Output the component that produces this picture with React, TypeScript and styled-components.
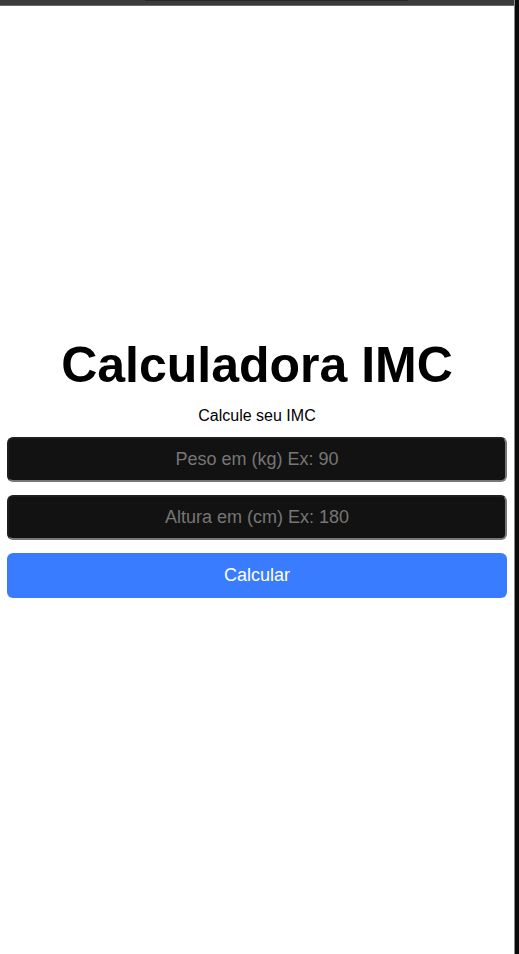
import React from "react";
import styled, { createGlobalStyle } from "styled-components";

const GlobalStyle = createGlobalStyle`
  body {
    margin: 0;
    background: #ffffff;
    font-family: "Liberation Sans", Arial, sans-serif;
  }
`;

const App = () => {
  return (
    <>
      <GlobalStyle />
      <Shell>
        <Column>
          <TopBar>
            <TopBarShade />
          </TopBar>
          <Page>
            <Title>Calculadora IMC</Title>
            <Subtitle>Calcule seu IMC</Subtitle>
            <Form onSubmit={(e) => e.preventDefault()}>
              <Field type="number" placeholder="Peso em (kg) Ex: 90" />
              <Field type="number" placeholder="Altura em (cm) Ex: 180" />
              <SubmitBtn type="submit">Calcular</SubmitBtn>
            </Form>
          </Page>
        </Column>
        <EdgeBar />
      </Shell>
    </>
  );
};

export default App;

const Shell = styled.div`
  display: flex;
  width: 100%;
  height: 100vh;
`;

const Column = styled.div`
  flex: 1;
  display: flex;
  flex-direction: column;
`;

const TopBar = styled.div`
  height: 5px;
  background-color: #3b3b3b;
  border-bottom: 1px solid #6a6a6a;
  position: relative;
`;

const TopBarShade = styled.div`
  position: absolute;
  top: 0;
  left: 145px;
  width: 263px;
  height: 1px;
  background-color: #262626;
`;

const Page = styled.div`
  flex: 1;
  display: flex;
  flex-direction: column;
  align-items: center;
  padding-top: 332px;
`;

const Title = styled.h1`
  margin: 0;
  font-size: 50px;
  line-height: 1.1;
  font-weight: 700;
  color: #000;
`;

const Subtitle = styled.p`
  margin: 14px 0 12px;
  font-size: 16px;
  color: #000;
`;

const Form = styled.form`
  width: calc(100% - 14px);
  display: flex;
  flex-direction: column;
  gap: 13px;
`;

const Field = styled.input`
  box-sizing: border-box;
  width: 100%;
  height: 45px;
  background-color: #121212;
  border: 2px solid;
  border-color: #1e1e1e #777777 #777777 #1e1e1e;
  border-radius: 6px;
  color: #fff;
  font-family: "Liberation Sans", Arial, sans-serif;
  font-size: 18px;
  text-align: center;
  outline: none;
  appearance: textfield;

  &::placeholder {
    color: #767676;
  }
  &::-webkit-inner-spin-button,
  &::-webkit-outer-spin-button {
    -webkit-appearance: none;
    margin: 0;
  }
`;

const SubmitBtn = styled.button`
  width: 100%;
  height: 45px;
  background-color: #3a7cff;
  border: none;
  border-radius: 6px;
  color: #fff;
  font-family: "Liberation Sans", Arial, sans-serif;
  font-size: 18px;
  cursor: pointer;
`;

const EdgeBar = styled.div`
  width: 4px;
  background-color: #0a0a0a;
  border-left: 1px solid #8a8a8a;
`;
